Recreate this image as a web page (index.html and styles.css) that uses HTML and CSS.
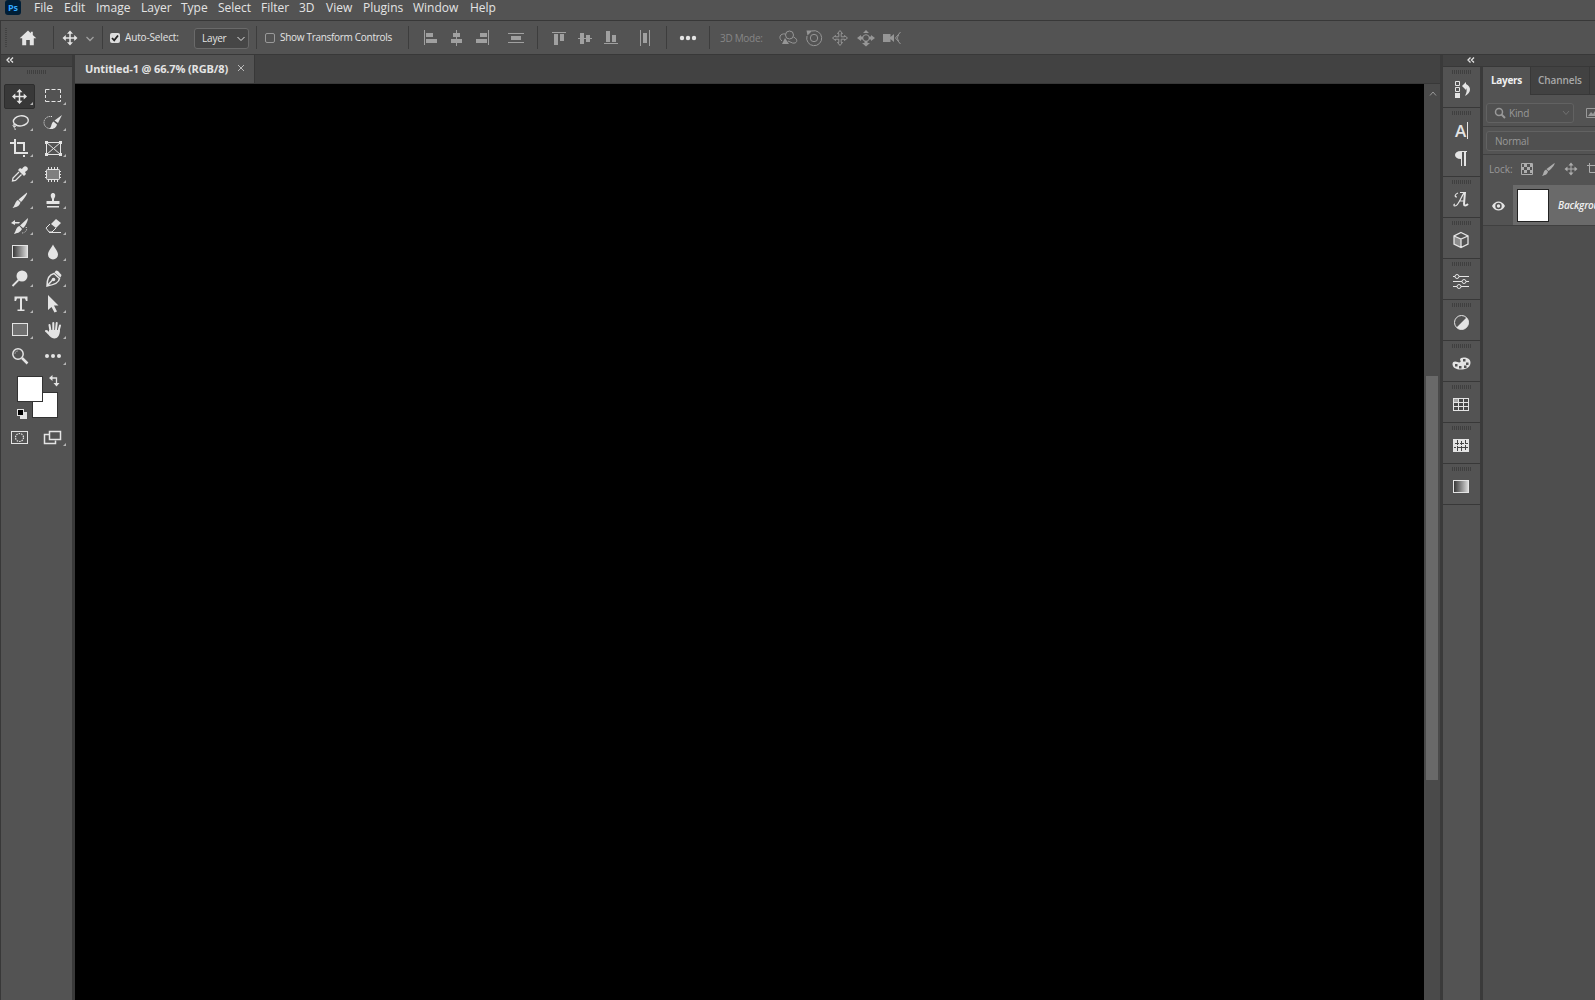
FILE: index.html
```
<!DOCTYPE html>
<html lang="en">
<head>
    <meta charset="UTF-8">
    <title>Untitled-1 @ 66.7% (RGB/8)</title>
    <link rel="stylesheet" href="styles.css">
</head>
<body>
    <nav class="menu-bar">
        <span class="app-logo">Ps</span>
        <span>File</span><span>Edit</span><span>Image</span><span>Layer</span><span>Type</span><span>Select</span><span>Filter</span><span>3D</span><span>View</span><span>Plugins</span><span>Window</span><span>Help</span>
    </nav>

    <div class="options-bar">
        <div class="option-section home">
            <i class="grip-v"></i>
            <svg width="24" height="24" viewBox="-12 -12 24 24"><path d="M0-7.5L-8.3.2h2.5V7.3h4V2h3.6v5.3h4V.2h2.5L4.8-3V-6.3H2.8v1.500z"/></svg>
        </div>
        <div class="option-section current-tool">
            <svg width="24" height="24" viewBox="-12 -12 24 24"><path class="line" d="M-5 0H5M0-5V5" stroke-width="1.5"/><path d="M0-7.5l3 3.3h-6zM0 7.5l3-3.3h-6zM-7.5 0l3.3-3v6zM7.5 0l-3.3-3v6z"/></svg>
            <svg class="dim" width="16" height="24" viewBox="-8 -12 16 24"><path class="line" d="M-3.5-1L0 2.5 3.5-1" stroke-width="1.3"/></svg>
        </div>
        <div class="option-section auto-select">
            <span class="checkbox checked"><svg width="10" height="10" viewBox="0 0 10 10"><path d="M2 5l2.200 2.300L8 2.5"/></svg></span>
            <span class="label">Auto-Select:</span>
            <div class="select">Layer<svg width="10" height="10" viewBox="-5 -5 10 10"><path class="line" d="M-3.5-1L0 2.5 3.5-1"/></svg></div>
        </div>
        <div class="option-section transform">
            <span class="checkbox"></span>
            <span class="label">Show Transform Controls</span>
        </div>
        <div class="option-section align horizontal dim">
            <svg width="24" height="24" viewBox="-12 -12 24 24"><path d="M-7-8h1V7h-1zM-5-5h7v4h-7zM-5 1H6v4H-5z"/></svg>
            <svg width="24" height="24" viewBox="-12 -12 24 24"><path d="M-1-8h1V8h-1zM-4-5h7v4h-7zM-6 1H5v4H-6z"/></svg>
            <svg width="24" height="24" viewBox="-12 -12 24 24"><path d="M5-8h1V7H5zM-3-5h7v4h-7zM-7 1H4v4H-7z"/></svg>
            <svg class="spaced" width="24" height="24" viewBox="-12 -12 24 24"><path d="M-8-5H8v1H-8zM-8 4H8v1H-8zM-5-2H5v4H-5z"/></svg>
        </div>
        <div class="option-section align dim">
            <svg width="24" height="24" viewBox="-12 -12 24 24"><path d="M-7-6H7v1H-7zM-5-4h4V7h-4zM1-4h4v7H1z"/></svg>
            <svg width="24" height="24" viewBox="-12 -12 24 24"><path d="M-7 0H7v1H-7zM-5-5h4V6h-4zM1-3h4v7H1z"/></svg>
            <svg width="24" height="24" viewBox="-12 -12 24 24"><path d="M-7 5H7v1H-7zM-5-7h4V4h-4zM1-3h4v7H1z"/></svg>
            <svg class="spaced" width="24" height="24" viewBox="-12 -12 24 24"><path d="M-5-8h1V8h-1zM4-8h1V8H4zM-2-5h4V5h-4z"/></svg>
        </div>
        <div class="option-section more">
            <svg width="24" height="24" viewBox="-12 -12 24 24"><circle cx="-6" r="2.2"/><circle r="2.2"/><circle cx="6" r="2.2"/></svg>
        </div>
        <div class="option-section mode-3d">
            <span class="label">3D Mode:</span>
            <svg width="24" height="24" viewBox="-12 -12 24 24"><circle class="line" cx="1.500" cy="-3" r="4"/><path class="line" d="M-2.500-4C-8-5-10 0-6 3M5.500-1c5 2 4 7-1 6L0 3"/><path d="M-3 0l4 6h-7z"/></svg>
            <svg width="24" height="24" viewBox="-12 -12 24 24"><circle class="line" r="3.7"/><path class="line" d="M-2-7A7.500 7.500 0 1 1-7-2"/><path d="M-7.500-7.500h6l-5 5z"/></svg>
            <svg width="24" height="24" viewBox="-12 -12 24 24"><path class="line" d="M0-7.500l2.500 3H1.200v3.300h3.300v-1.300l3 2.500-3 2.500V1.200H1.200v3.300h1.300l-2.500 3-2.500-3h1.300V1.200h-3.300v1.300l-3-2.500 3-2.500v1.300h3.300v-3.300h-1.300z"/></svg>
            <svg width="24" height="24" viewBox="-12 -12 24 24"><circle class="line" r="3.3"/><path d="M0 8.500l-4-3.500h2.500V3h3v2H4zM-9 0l4-3v1.500h2v3h-2V3zM9 0L5-3v1.500H3v3h2V3zM0-8l3 3h-6z"/></svg>
            <svg width="24" height="24" viewBox="-12 -12 24 24"><path d="M-9-4h7.500v3L2-4v8l-3.500-3v3H-9z"/><path class="line" d="M8.500-6L3.500 0l5 6M7-3c-2 2-2 4 0 6"/></svg>
        </div>
    </div>

    <div class="workspace">
        <aside class="toolbox">
            <div class="panel-head"><svg width="8" height="6" viewBox="0 0 8 6"><path class="line" d="M3.500.5L1 3l2.500 2.500M7 .5L4.500 3 7 5.500" stroke-width="1.3"/></svg></div>
            <i class="grip"></i>
            <div class="tools">
                <div class="tool active"><svg viewBox="-16 -13 33 26"><path class="line" d="M-5 .5H5M-.5-5V6" stroke-width="1.5"/><path d="M-.5-7l3 3.300h-6zM-.5 8l3-3.300h-6zM-8 .5l3.300-3v6zM7 .5l-3.300-3v6z"/></svg></div>
                <div class="tool"><svg viewBox="-16 -13 33 26"><path class="line" d="M-7.500-3v-3.500h4M-1.500-6.500h4M4.500-6.500h3V-3M7.500-1v3M7.500 4v1.500h-3M2.500 5.500h-4M-3.500 5.500h-4V4M-7.500 2v-3"/></svg></div>
                <div class="tool"><svg viewBox="-16 -13 33 26"><ellipse class="line" cx="1" cy="-1" rx="7.500" ry="5" transform="rotate(-8)" stroke-width="1.4"/><path class="line" d="M-5 2c-4 1-1 4 1 2s-2-3-2 0 2 2 1 4"/></svg></div>
                <div class="tool"><svg viewBox="-16 -13 33 26"><path class="line" d="M-1-5.500h-2a6 6 0 0 0 0 12H0" stroke-dasharray="1.200 1"/><path d="M9-7L5 1 1.500-1.500zM.5-.5L4 2.500C3 7-1 7-4 7-1 5-2 1 .5-.5z"/></svg></div>
                <div class="tool"><svg viewBox="-16 -13 33 26"><path d="M-10-6h4v-3h2V4H8v2H-6V-4h-4zM-3-6h8V3H3v-7h-6zM3 7h2v2H3z"/></svg></div>
                <div class="tool"><svg viewBox="-16 -13 33 26"><path class="line" d="M-6.500-5.500h14v12h-14zM-6.500-5.500l14 12M7.500-5.500l-14 12"/><path d="M-8-7h3v3h-3zM6-7h3v3H6zM-8 5h3v3h-3zM6 5h3v3H6z"/></svg></div>
                <div class="tool"><svg viewBox="-16 -13 33 26"><path d="M7-7c2 2 0 4-2 5l1 2-2 2-6-6 2-2 2 1c1-2 3-4 5-2z"/><path class="line" d="M-1-2l-6 6-.5 3 3-.5 6-6" stroke-width="1.3"/></svg></div>
                <div class="tool"><svg viewBox="-16 -13 33 26"><rect class="line" x="-6.500" y="-4.500" width="13" height="10" fill-opacity=".3" rx="1"/><path class="line" d="M-4.500-7v3M-1.500-7v3M1.500-7v3M4.500-7v3M-4.500 5v3M-1.500 5v3M1.500 5v3M4.500 5v3M-8-2.500h2M-8 .5h2M-8 3.500h2M6-2.500h2M6 .5h2M6 3.500h2"/></svg></div>
                <div class="tool"><svg viewBox="-16 -13 33 26"><path d="M7-7.500c1 1-4 8-6 9.500L-1.500-.5zM-2 0L.5 2.500C-1 7-4 7-7.500 8-5 6-5 1-2 0z"/></svg></div>
                <div class="tool"><svg viewBox="-16 -13 33 26"><path d="M-1-1c-5-8 7-8 2 0v2h5.500v3h-13V1H-1zM-6 6H6v1.500H-6z"/></svg></div>
                <div class="tool"><svg viewBox="-16 -13 33 26"><path d="M8-8C8-5 5 1 3 2L0-.5zM-.5 0L2 3C0 7-3 7-6 8-4 5-4 1-.5 0zM-9-3l4-3v2h5l-1 1.500h-4V-1z"/><path class="line" d="M6 1c2 3-1 6-4 6" stroke-dasharray="1 1.500"/></svg></div>
                <div class="tool"><svg viewBox="-16 -13 33 26"><path d="M3-7l5 4-5 5-5-4z"/><path class="line" d="M-3-2l-4 4 3 4h3l4-4M-4 6.500H8"/></svg></div>
                <div class="tool"><svg viewBox="-16 -13 33 26"><defs><linearGradient id="ramp"><stop offset="0" stop-color="#333"/><stop offset="1" stop-color="#ddd"/></linearGradient></defs><rect class="line" x="-7.500" y="-6.500" width="15" height="12" fill="url(#ramp)"/></svg></div>
                <div class="tool"><svg viewBox="-16 -13 33 26"><path d="M0-7.500C1.500-4 5-1 5 2.500a5 5 0 0 1-10 0C-5-1-1.500-4 0-7.500z"/></svg></div>
                <div class="tool"><svg viewBox="-16 -13 33 26"><circle cx="2" cy="-2" r="5.500"/><path class="line" d="M-1.500 2L-7.500 8" stroke-width="1.8"/></svg></div>
                <div class="tool"><svg viewBox="-16 -13 33 26"><path class="line" d="M1-4.500l5.500 5C6 5 0 7-6 8-6 2-4-3.500 1-4.500zM-6 8L-.5 2" stroke-width="1.5"/><path d="M3-7.500l2 .5 3.500 4L7.500-.5 1.500-5.500z"/><circle cx=".5" cy="1.500" r="1.800"/></svg></div>
                <div class="tool"><svg viewBox="-16 -13 33 26"><path d="M-5.500-7.500h13V-3H6L5-5.500H2v11h2.500V7h-7V5.500H0v-11h-3L-4-3h-1.500z"/></svg></div>
                <div class="tool"><svg viewBox="-16 -13 33 26"><path d="M-5-9L5.500 1.500H1l3 6L1.500 8.500-1.500 3-5 6z"/></svg></div>
                <div class="tool"><svg viewBox="-16 -13 33 26"><rect class="line" x="-7.500" y="-6.500" width="15" height="12" fill-opacity=".2"/></svg></div>
                <div class="tool"><svg viewBox="-16 -13 33 26"><path class="line" d="M-2.500 1l-1-6M.3 0v-7M3 0l.7-7M5.500 1L7-4.500" stroke-width="2" stroke-linecap="round"/><path d="M-4 0H7c0 5-2.500 8.500-5.500 8.500C-2.500 8.500-4.500 4-8 1.500-8-1-5 0-4 2z"/></svg></div>
                <div class="tool plain"><svg viewBox="-16 -13 33 26"><circle class="line" cx="-2" cy="-2" r="5.2" stroke-width="1.5"/><path class="line" d="M-5-2c0-2 1-3 3-3" stroke-opacity=".5"/><path class="line" d="M2 2l5.500 5.500" stroke-width="2.500"/></svg></div>
                <div class="tool"><svg viewBox="-16 -13 33 26"><circle cx="-6" r="2"/><circle r="2"/><circle cx="6" r="2"/></svg></div>
            </div>
            <div class="swatches">
                <i class="background-color"></i>
                <i class="foreground-color"></i>
                <svg class="swap" width="12" height="12" viewBox="0 0 12 12"><path class="line" d="M2 3h5.500v6" stroke-width="1.3"/><path d="M0 3l3.500-3v6zM7.500 11.500l-3-3.500h6z"/></svg>
                <svg class="reset" width="11" height="11" viewBox="0 0 11 11"><path d="M3 3h7v7H3z"/><path d="M0 0h7v7H0z"/><path d="M1 1h5v5H1z" fill="#000"/></svg>
            </div>
            <div class="tools">
                <div class="tool plain"><svg viewBox="-16 -13 33 26"><rect class="line" x="-8.500" y="-5.500" width="16" height="12"/><circle class="line" cx="-.5" cy=".5" r="4" stroke-width="1.200" stroke-dasharray="1.500 1"/></svg></div>
                <div class="tool"><svg viewBox="-16 -13 33 26"><path class="line" d="M-3.500-2.500h-5v9H2.500v-3" stroke-width="1.500"/><rect class="line" x="-3.500" y="-5.500" width="11" height="8" stroke-width="1.500"/></svg></div>
            </div>
        </aside>

        <main class="document">
            <div class="document-tabs"><div class="document-tab"><span>Untitled-1 @ 66.7% (RGB/8)</span><svg width="8" height="8" viewBox="0 0 8 8"><path class="line" d="M1 1l6 6M7 1L1 7"/></svg></div></div>
            <div class="document-body">
                <div class="canvas"></div>
                <div class="scrollbar"><svg width="8" height="5" viewBox="0 0 8 5"><path class="line" d="M1 4.500l3-3.500 3 3.500"/></svg><div class="scroll-thumb"></div></div>
            </div>
        </main>

        <div class="docks">
            <div class="panel-head"><svg width="8" height="6" viewBox="0 0 8 6"><path class="line" d="M3.500.5L1 3l2.500 2.500M7 .5L4.500 3 7 5.500" stroke-width="1.3"/></svg></div>
            <div class="dock-columns">
                <aside class="icon-dock">
                    <div class="dock-group"><i class="grip"></i><svg viewBox="-12 -12 24 24"><path class="line" d="M-5.500-7.500h4v4h-4zM-5.500-1.500h4v4h-4z"/><path d="M-6 4h5v5h-5zM1-3l4-4v2c6 3 5 9-1 12 2-4 2-6 1-8v2z"/></svg></div>
                    <div class="dock-group"><i class="grip"></i><span class="glyph">A<i class="caret"></i></span><svg class="pilcrow" viewBox="-12 -12 24 24"><path d="M6-7v1H5V8H3V-6H1V8h-1V1c-8 0-8-8 0-8z"/></svg></div>
                    <div class="dock-group"><i class="grip"></i><svg viewBox="-12 -12 24 24"><path class="line" d="M-3-6c-3 1-4 4-1 4M-1-6.500h6M3.500-6.500C0-3-2 7-6 7c-1.500 0-1.500-2 0-2M-2 2h5" stroke-width="1.2"/><path class="line" d="M4-7L3 5c0 2 2 2 4 0" stroke-width="2"/></svg></div>
                    <div class="dock-group"><i class="grip"></i><svg viewBox="-12 -12 24 24"><path d="M-7-4L0-1v8.500L-7 4z" fill-opacity=".4"/><path class="line" d="M0-7.500L7-4v8L0 7.500-7 4v-8zM-7-4L0-1l7-3M0-1v8" stroke-width="1.3"/></svg></div>
                    <div class="dock-group"><i class="grip"></i><svg viewBox="-12 -12 24 24"><path class="line" d="M-8-4.500h2M-2-4.500H8M-8 .5h9M5 .5h3M-8 5.500h4M0 5.500h8"/><circle class="line" cx="-4" cy="-4.500" r="2"/><circle class="line" cx="3" cy=".5" r="2"/><circle class="line" cx="-2" cy="5.500" r="2"/></svg></div>
                    <div class="dock-group"><i class="grip"></i><svg viewBox="-12 -12 24 24"><circle class="line" cx=".5" cy=".5" r="7"/><path d="M5.500-4.500A7 7 0 0 1-4.500 5.500z"/></svg></div>
                    <div class="dock-group"><i class="grip"></i><svg viewBox="-12 -12 24 24"><path fill-rule="evenodd" d="M-1-3c0-4 11-3 10.500 3S2 7-2 6.500-8.500 4-8.500 1s3-3 5-2 4.500 0 2.500-2zM2-4v2.500h2.500V-4zM5-.5V2h2.500V-.5zM3 2.500V5h2.500V2.500zM-2 3v2.500H.5V3zM-6 1v2.500h2.500V1z"/></svg></div>
                    <div class="dock-group"><i class="grip"></i><svg viewBox="-12 -12 24 24"><path d="M-8-6H8V7H-8z"/><path class="ink" d="M-2-5h4v3h-4zM3-5h4v3H3zM-7-1h4v3h-4zM-2-1h4v3h-4zM3-1h4v3H3zM-7 3h4v3h-4zM-2 3h4v3h-4zM3 3h4v3H3z"/><path class="ink" d="M-7-5h4v3h-4z" fill-opacity=".4"/></svg></div>
                    <div class="dock-group"><i class="grip"></i><svg viewBox="-12 -12 24 24"><path d="M-8-6H8V7H-8z"/><path class="ink-line" d="M-6-1.500h4M-1-1.500h4M5-1.500h2M-7 2.500h2M-4 2.500h4M1 2.500h6M-3.500-5v5M-3.500 1v5M.5-4v4M.5 1v5M4.500-5v4M4.500 0v5"/></svg></div>
                    <div class="dock-group"><i class="grip"></i><svg viewBox="-12 -12 24 24"><rect class="line" x="-7.500" y="-5.500" width="15" height="12" fill="url(#ramp)"/></svg></div>
                </aside>

                <section class="layers-panel">
                    <div class="panel-tabs"><span class="panel-tab active">Layers</span><span class="panel-tab">Channels</span><span class="panel-tab"></span></div>
                    <div class="filter-row">
                        <div class="field kind"><svg width="12" height="12" viewBox="0 0 12 12"><circle class="line" cx="5" cy="5" r="3.500" stroke-width="1.5"/><path class="line" d="M7.500 7.500L11 11" stroke-width="2"/></svg><span>Kind</span><svg class="arrow" width="8" height="6" viewBox="0 0 8 6"><path class="line" d="M1 1l3 3.500L7 1"/></svg></div>
                        <svg width="14" height="10" viewBox="0 0 14 10"><path class="line" d="M.5.5h13v9H.5z"/><path d="M2 8l3-4 2 2 2-3 4 5z"/></svg>
                    </div>
                    <div class="blend-row"><div class="field blend">Normal</div></div>
                    <div class="lock-row">
                        <span>Lock:</span>
                        <svg width="12" height="12" viewBox="0 0 12 12"><path class="line" d="M.5.5h11v11H.5z"/><path d="M3 1h3v3H3zM9 1h2v3H9zM1 4h2v3H1zM6 4h3v3H6zM3 7h3v3H3zM9 7h2v3H9z"/></svg>
                        <svg width="13" height="13" viewBox="0 0 13 13"><path d="M12.500 0c1 1-4 7-6 8L4.500 6zM4 6.500l2 2C5 12 3 12 0 13c2-2 1-5 4-6.500z"/></svg>
                        <svg width="14" height="14" viewBox="-7 -7 14 14"><path class="line" d="M-5 0H5M0-5V5"/><path d="M0-6.500l2.500 3h-5zM0 6.500l2.500-3h-5zM-6.500 0l3-2.500v5zM6.500 0l-3-2.500v5z"/></svg>
                        <svg width="12" height="12" viewBox="0 0 12 12"><path class="line" d="M2.500 0v9.500H12M0 2.500h9.500V12"/></svg>
                    </div>
                    <div class="layer">
                        <div class="visibility"><svg width="13" height="10" viewBox="0 0 13 10"><path fill-rule="evenodd" d="M0 5c3-6 10-6 13 0-3 6-10 6-13 0zM6.500 1.800a3.200 3.200 0 1 0 0 6.400 3.200 3.200 0 0 0 0-6.400z"/><circle cx="6.500" cy="5" r="1.700"/></svg></div>
                        <div class="layer-info"><i class="thumbnail"></i><em>Background</em></div>
                    </div>
                </section>
            </div>
        </div>
    </div>
</body>
</html>
```

FILE: styles.css
```
* {
    box-sizing: border-box;
}
body {
    margin: 0;
    height: 100vh;
    overflow: hidden;
    display: flex;
    flex-direction: column;
    background: #535353;
    color: #e4e4e4;
    font-family: "Open Sans", sans-serif;
    font-size: 10px;
}
svg {
    display: block;
    flex: none;
    fill: currentColor;
}
.line {
    stroke: currentColor;
}
path.line, circle.line, ellipse.line {
    fill: none;
}
rect.line:not([fill]):not([fill-opacity]) {
    fill: none;
}
.dim {
    color: #a0a0a0;
}

/* menu */
.menu-bar {
    flex: none;
    height: 21px;
    padding-left: 5px;
    display: grid;
    grid-template-columns: 29px 30px 32px 45px 40px 37px 43px 38px 27px 37px 50px 57px auto;
    border-bottom: 1px solid #383838;
    font-size: 12px;
    line-height: 16px;
    white-space: nowrap;
}
.app-logo {
    width: 16px;
    height: 15px;
    background: #001e36;
    border-radius: 3px;
    color: #31a8ff;
    font-size: 9px;
    font-weight: 700;
    line-height: 15px;
    text-align: center;
}

/* tool options */
.options-bar {
    flex: none;
    height: 34px;
    display: flex;
    align-items: center;
    border-left: 1px solid #383838;
    border-bottom: 1px solid #383838;
}
.option-section {
    height: 23px;
    display: flex;
    align-items: center;
    border-left: 1px solid #3d3d3d;
    white-space: nowrap;
}
.home {
    width: 52px;
    border: 0;
    padding-left: 4px;
    gap: 9px;
}
.grip-v {
    width: 2px;
    height: 19px;
    background: repeating-linear-gradient(#424242 0 1px, transparent 1px 2px);
}
.current-tool {
    width: 49px;
    padding-left: 4px;
}
.auto-select {
    width: 154px;
    padding-left: 7px;
}
.auto-select .label {
    letter-spacing: -0.15px;
}
.transform {
    width: 152px;
    padding-left: 8px;
}
.transform .label {
    letter-spacing: -0.3px;
}
.align {
    width: 129px;
    padding-left: 9px;
    gap: 2px;
}
.align.horizontal {
    padding-left: 10px;
}
.align .spaced {
    margin-left: 8px;
}
.horizontal .spaced {
    margin-left: 7px;
}
.more {
    width: 43px;
    padding-left: 9px;
}
.mode-3d {
    padding-left: 10px;
    gap: 2px;
    color: #969696;
}
.mode-3d .label {
    width: 54px;
    margin: 0;
    color: #868686;
    letter-spacing: -0.3px;
}
.checkbox {
    width: 10px;
    height: 10px;
    border: 1px solid #999;
    border-radius: 2px;
}
.checkbox.checked {
    background: #ddd;
    border: 0;
}
.checkbox path {
    fill: none;
    stroke: #222;
    stroke-width: 1.8;
}
.label {
    margin: -1px 0 0 5px;
}
.select {
    width: 55px;
    height: 21px;
    margin: 1px 7px 0 auto;
    padding: 0 2px 0 7px;
    display: flex;
    align-items: center;
    justify-content: space-between;
    background: #464646;
    border: 1px solid #6a6a6a;
    border-radius: 3px;
    letter-spacing: -0.2px;
}

.workspace {
    flex: 1;
    min-height: 0;
    display: flex;
}
.panel-head {
    height: 12px;
    background: #424242;
    border-bottom: 1px solid #383838;
}
.grip {
    display: block;
    width: 19px;
    height: 4px;
    background: repeating-linear-gradient(90deg, #3f3f3f 0 1px, transparent 1px 2px);
}

/* toolbox */
.toolbox {
    width: 75px;
    border-left: 1px solid #383838;
    border-right: 3px solid #3a3a3a;
}
.toolbox .panel-head {
    padding: 2px 0 0 5px;
}
.toolbox > .grip {
    margin: 3px 0 9px 26px;
}
.tools {
    display: grid;
    grid-template-columns: 33px 33px;
    grid-auto-rows: 26px;
    padding-left: 3px;
}
.tool {
    position: relative;
}
.tool svg {
    position: relative;
    width: 33px;
    height: 26px;
}
/* flyout marker */
.tool::after {
    content: "";
    position: absolute;
    right: 4px;
    bottom: 4px;
    width: 3px;
    height: 3px;
    background: #b5b5b5;
    clip-path: polygon(100% 0, 100% 100%, 0 100%);
}
.tool.plain::after {
    display: none;
}
.tool.active::before {
    content: "";
    position: absolute;
    inset: 1px 2px 0 0;
    background: #383838;
    border: 1px solid #2d2d2d;
    border-radius: 2px;
}
.swatches {
    position: relative;
    height: 55px;
}
.swatches > * {
    position: absolute;
}
.foreground-color, .background-color {
    width: 26px;
    height: 26px;
    background: #fff;
    border: 1px solid #333;
}
.foreground-color {
    left: 16px;
    top: 7px;
}
.background-color {
    left: 31px;
    top: 23px;
}
.swap {
    left: 48px;
    top: 6px;
}
.reset {
    left: 16px;
    top: 40px;
}

/* document window */
.document {
    flex: 1;
    display: flex;
    flex-direction: column;
}
.document-tabs {
    height: 29px;
    display: flex;
    background: #424242;
    border-bottom: 1px solid #383838;
}
.document-tab {
    width: 180px;
    height: 28px;
    padding: 0 9px 2px 10px;
    display: flex;
    align-items: center;
    justify-content: space-between;
    background: #535353;
    border-right: 1px solid #383838;
    font-size: 11px;
    font-weight: 700;
    letter-spacing: -0.13px;
    white-space: nowrap;
}
.document-tab svg {
    color: #bbb;
}
.document-body {
    flex: 1;
    display: flex;
}
.canvas {
    flex: 1;
    background: #000;
}
.scrollbar {
    width: 16px;
    padding: 7px 2px 0;
    background: #4a4a4a;
    color: #999;
}
.scrollbar svg {
    margin-left: 3px;
}
.scroll-thumb {
    width: 12px;
    height: 404px;
    margin-top: 280px;
    background: #696969;
}

/* right side */
.docks {
    width: 155px;
    display: flex;
    flex-direction: column;
    border-left: 3px solid #3a3a3a;
}
.docks .panel-head {
    padding: 2px 0 0 24px;
}
.dock-columns {
    flex: 1;
    display: flex;
}
.icon-dock {
    width: 40px;
    border-right: 3px solid #3a3a3a;
}
.dock-group {
    border-bottom: 1px solid #383838;
    padding: 3px 0 6px 9px;
}
.dock-group svg {
    width: 24px;
    height: 24px;
    margin: 3px 0 0 -3px;
}
.glyph {
    height: 24px;
    margin-top: 3px;
    padding-left: 3px;
    display: flex;
    align-items: center;
    font-size: 17px;
    font-weight: 600;
}
.caret {
    width: 1px;
    height: 17px;
    margin-left: 1px;
    background: currentColor;
}
.dock-group .pilcrow {
    margin-top: 4px;
}
.ink {
    fill: #484848;
}
.ink-line {
    stroke: #444;
}
.layers-panel {
    flex: 1;
    min-width: 0;
    overflow: hidden;
    background: #4e4e4e;
    color: #999;
    white-space: nowrap;
}
.panel-tabs {
    display: flex;
    height: 28px;
    background: #424242;
}
.panel-tab {
    flex: none;
    width: 59px;
    line-height: 26px;
    text-align: center;
    font-weight: 600;
    letter-spacing: -0.1px;
    color: #a9a9a9;
    border-right: 1px solid #383838;
    border-bottom: 1px solid #383838;
}
.panel-tab.active {
    width: 48px;
    background: #535353;
    border-bottom: 0;
    color: #f0f0f0;
    font-weight: 700;
    letter-spacing: -0.3px;
}
.filter-row, .blend-row {
    height: 32px;
    padding: 8px 0 0 3px;
    display: flex;
    gap: 12px;
    background: #535353;
    border-bottom: 1px solid #404040;
}
.filter-row > svg {
    margin-top: 5px;
}
.blend-row {
    height: 28px;
    padding-top: 4px;
}
.field {
    flex: none;
    height: 20px;
    display: flex;
    align-items: center;
    padding: 0 8px;
    border: 1px solid #626262;
    border-radius: 3px;
    background: #505050;
    color: #999;
    letter-spacing: -0.2px;
}
.kind {
    width: 88px;
    padding: 0 3px 0 7px;
    gap: 3px;
}
.kind .arrow {
    margin-left: auto;
    color: #707070;
}
.blend {
    width: 120px;
}
.lock-row {
    height: 30px;
    padding: 0 0 2px 6px;
    display: flex;
    align-items: center;
    gap: 9px;
    background: #535353;
}
.lock-row svg {
    color: #adadad;
}
.lock-row span {
    letter-spacing: -0.1px;
}
.layer {
    height: 41px;
    display: flex;
    border-bottom: 1px solid #404040;
}
.visibility {
    flex: none;
    width: 30px;
    padding: 16px 0 0 9px;
    background: #535353;
    color: #e4e4e4;
}
.layer-info {
    flex: 1;
    min-width: 0;
    overflow: hidden;
    display: flex;
    align-items: center;
    padding-left: 4px;
    gap: 9px;
    background: #6a6a6a;
    color: #f0f0f0;
    font-weight: 600;
    letter-spacing: -0.2px;
}
.thumbnail {
    flex: none;
    width: 32px;
    height: 33px;
    background: #fff;
    border: 1px solid #222;
}
```
